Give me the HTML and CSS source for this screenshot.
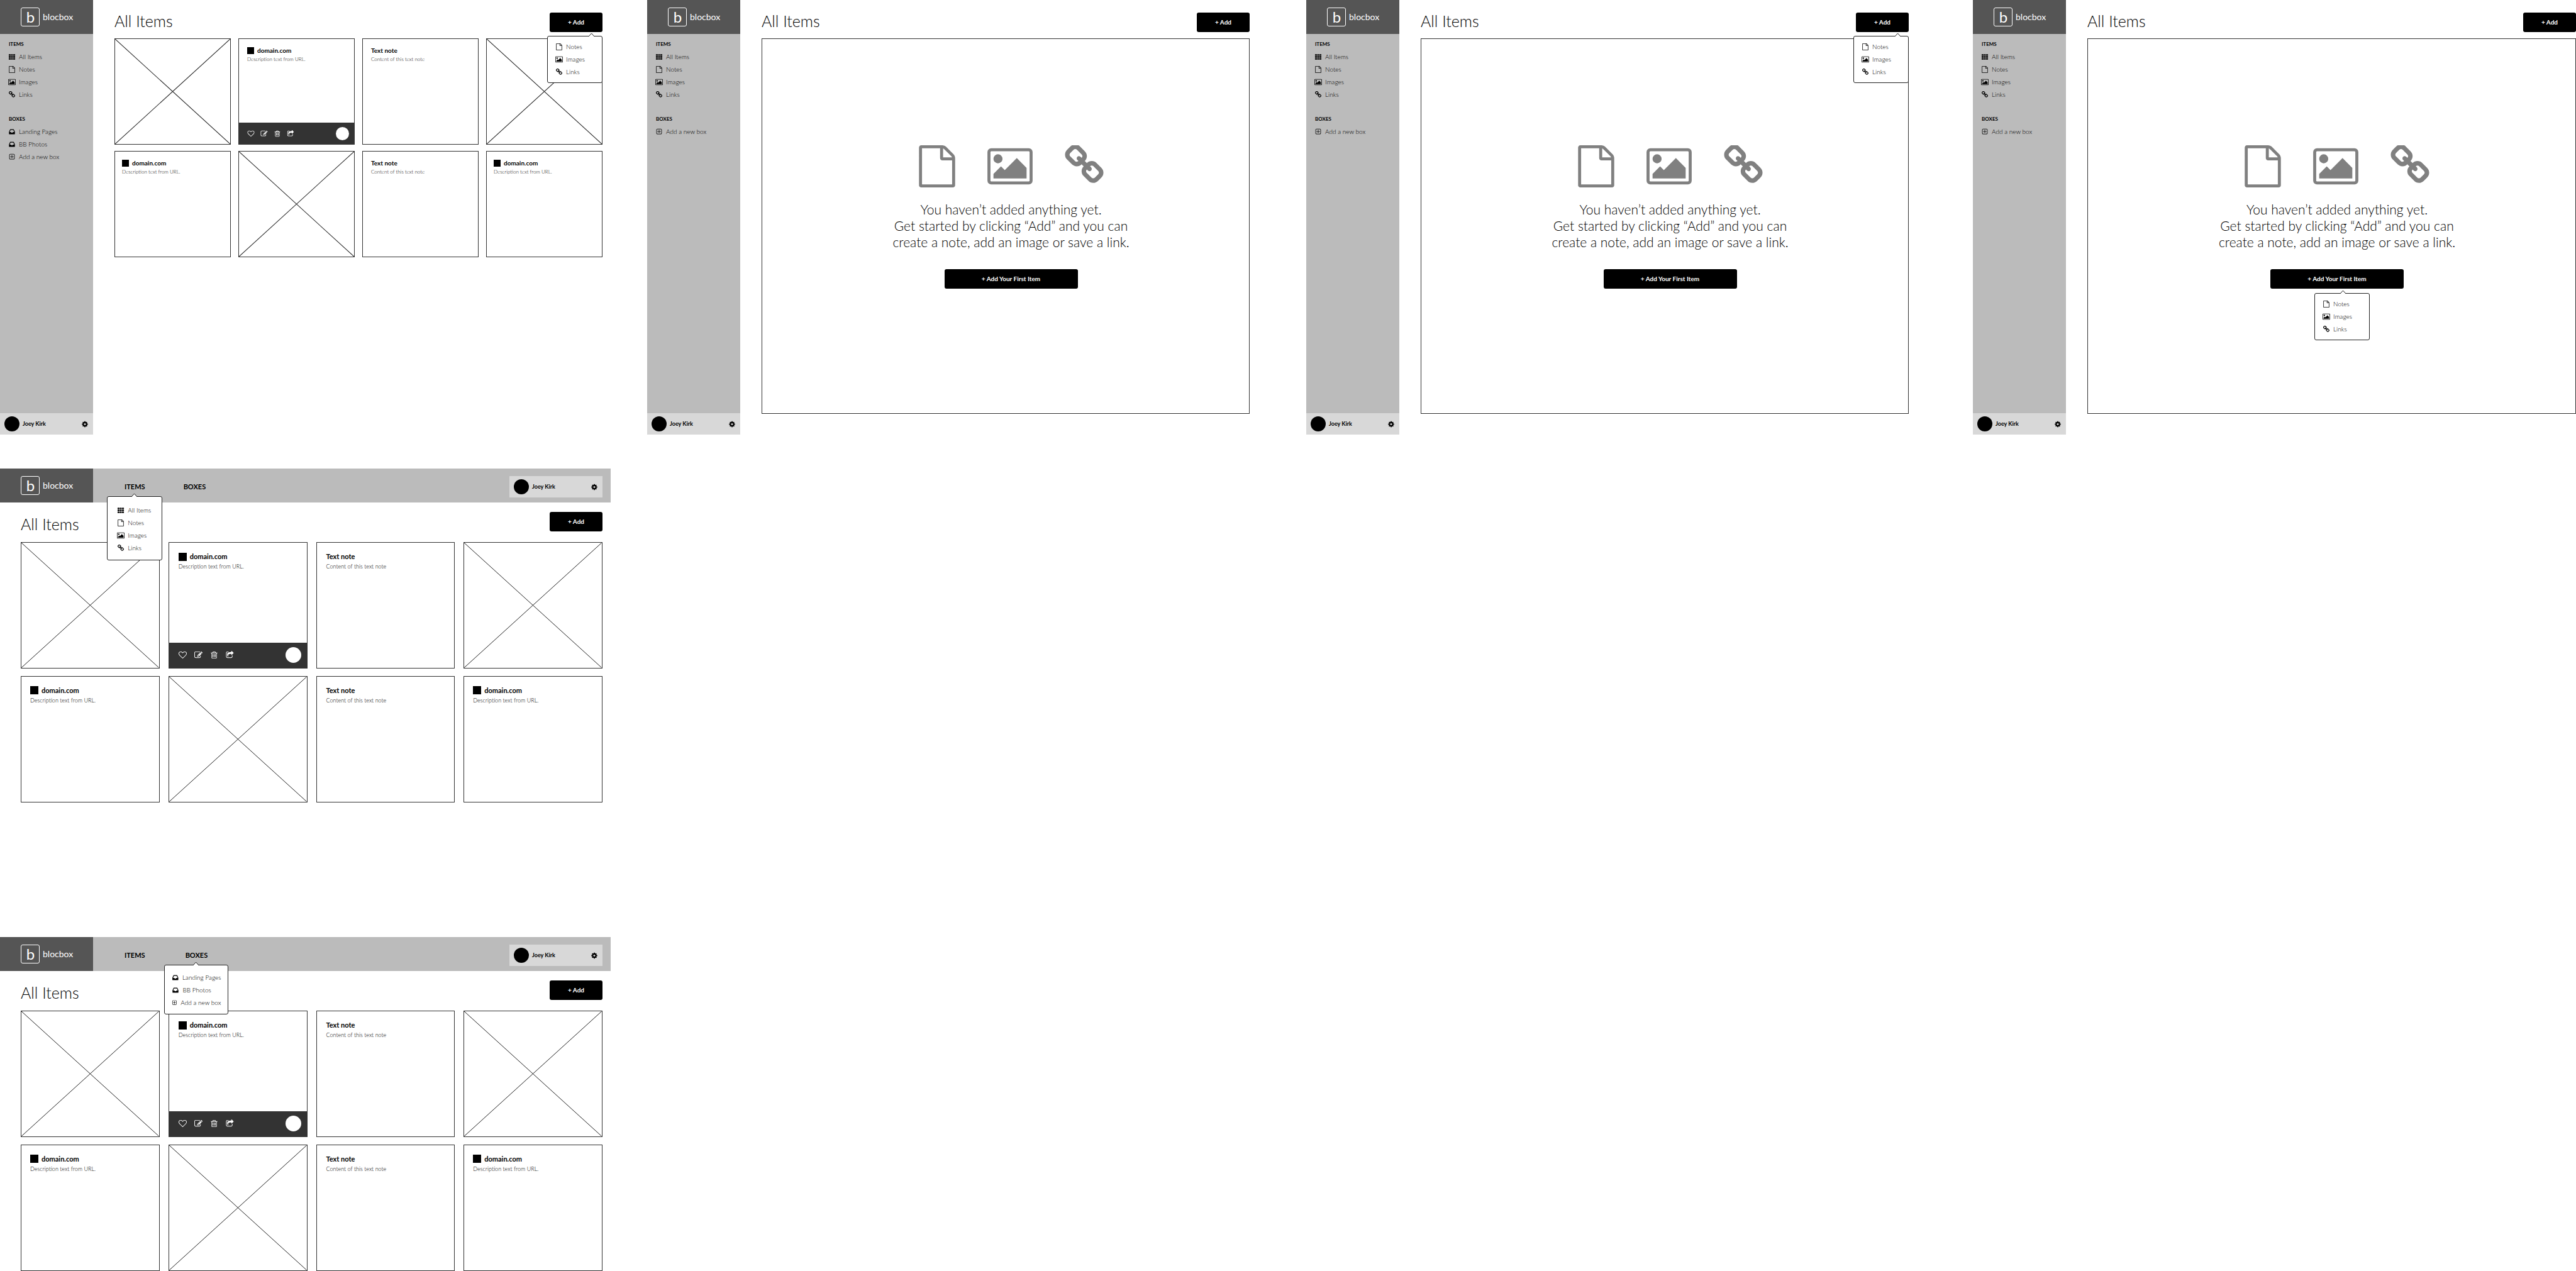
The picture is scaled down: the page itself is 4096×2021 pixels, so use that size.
FILE: index.html
```html
<!DOCTYPE html>
<html lang="en">
<head>
<meta charset="utf-8">
<meta name="viewport" content="width=device-width, initial-scale=1">
<title>blocbox wireframes</title>
<link rel="stylesheet" href="styles.css">
</head>
<body>
<svg class="sprite" aria-hidden="true">
  <symbol id="i-th" viewBox="0 0 1792 1792"><path d="M160 192h320a96 96 0 0 1 96 96v192a96 96 0 0 1-96 96h-320a96 96 0 0 1-96-96v-192a96 96 0 0 1 96-96zM736 192h320a96 96 0 0 1 96 96v192a96 96 0 0 1-96 96h-320a96 96 0 0 1-96-96v-192a96 96 0 0 1 96-96zM1312 192h320a96 96 0 0 1 96 96v192a96 96 0 0 1-96 96h-320a96 96 0 0 1-96-96v-192a96 96 0 0 1 96-96zM160 704h320a96 96 0 0 1 96 96v192a96 96 0 0 1-96 96h-320a96 96 0 0 1-96-96v-192a96 96 0 0 1 96-96zM736 704h320a96 96 0 0 1 96 96v192a96 96 0 0 1-96 96h-320a96 96 0 0 1-96-96v-192a96 96 0 0 1 96-96zM1312 704h320a96 96 0 0 1 96 96v192a96 96 0 0 1-96 96h-320a96 96 0 0 1-96-96v-192a96 96 0 0 1 96-96zM160 1216h320a96 96 0 0 1 96 96v192a96 96 0 0 1-96 96h-320a96 96 0 0 1-96-96v-192a96 96 0 0 1 96-96zM736 1216h320a96 96 0 0 1 96 96v192a96 96 0 0 1-96 96h-320a96 96 0 0 1-96-96v-192a96 96 0 0 1 96-96zM1312 1216h320a96 96 0 0 1 96 96v192a96 96 0 0 1-96 96h-320a96 96 0 0 1-96-96v-192a96 96 0 0 1 96-96z"/></symbol>
  <symbol id="i-file" viewBox="128 0 1536 1792"><path d="M1596 380q28 28 48 76t20 88v1152q0 40-28 68t-68 28h-1344q-40 0-68-28t-28-68v-1600q0-40 28-68t68-28h896q40 0 88 20t76 48zm-444-244v376h376q-10-29-22-41l-313-313q-12-12-41-22zm384 1528v-1024h-416q-40 0-68-28t-28-68v-416h-768v1536h1280z"/></symbol>
  <symbol id="i-picture" viewBox="-64 0 1920 1792"><path d="M576 576q0 80-56 136t-136 56-136-56-56-136 56-136 136-56 136 56 56 136zm1024 384v448h-1408v-192l320-320 160 160 512-512zm96-704h-1600q-13 0-22.500 9.500t-9.500 22.500v1216q0 13 9.500 22.500t22.500 9.500h1600q13 0 22.500-9.500t9.500-22.500v-1216q0-13-9.500-22.500t-22.500-9.500zm160 32v1216q0 66-47 113t-113 47h-1600q-66 0-113-47t-47-113v-1216q0-66 47-113t113-47h1600q66 0 113 47t47 113z"/></symbol>
  <symbol id="i-link" viewBox="80 50 1632 1792"><path d="M1520 1216q0-40-28-68l-208-208q-28-28-68-28-42 0-72 32 3 3 19 18.500t21.500 21.500 15 19 13 25.500 3.500 27.500q0 40-28 68t-68 28q-15 0-27.500-3.500t-25.500-13-19-15-21.500-21.500-18.500-19q-33 31-33 73 0 40 28 68l206 207q27 27 68 27 40 0 68-26l147-146q28-28 28-67zm-703-705q0-40-28-68l-206-207q-28-28-68-28-39 0-68 27l-147 146q-28 28-28 67 0 40 28 68l208 208q27 27 68 27 42 0 72-31-3-3-19-18.500t-21.500-21.500-15-19-13-25.500-3.500-27.500q0-40 28-68t68-28q15 0 27.500 3.500t25.500 13 19 15 21.500 21.500 18.500 19q33-31 33-73zm895 705q0 120-85 203l-147 146q-83 83-203 83-121 0-204-85l-206-207q-83-83-83-203 0-123 88-209l-88-88q-86 88-208 88-120 0-204-84l-208-208q-84-84-84-204t85-203l147-146q83-83 203-83 121 0 204 85l206 207q83 83 83 203 0 123-88 209l88 88q86-88 208-88 120 0 204 84l208 208q84 84 84 204z"/></symbol>
  <symbol id="i-inbox" viewBox="0 0 1792 1792"><path d="M1151 960h316q-1-3-2.500-8t-2.500-8l-212-496h-708l-212 496q-1 2-2.500 8t-2.500 8h316l95 192h320zm513 30v482q0 26-19 45t-45 19h-1408q-26 0-45-19t-19-45v-482q0-62 25-123l238-552q10-25 36.500-42t52.500-17h832q26 0 52.500 17t36.500 42l238 552q25 61 25 123z"/></symbol>
  <symbol id="i-plus" viewBox="0 0 1792 1792"><path d="M1344 800v64q0 14-9 23t-23 9h-352v352q0 14-9 23t-23 9h-64q-14 0-23-9t-9-23v-352h-352q-14 0-23-9t-9-23v-64q0-14 9-23t23-9h352v-352q0-14 9-23t23-9h64q14 0 23 9t9 23v352h352q14 0 23 9t9 23zm128 448v-832q0-66-47-113t-113-47h-832q-66 0-113 47t-47 113v832q0 66 47 113t113 47h832q66 0 113-47t47-113zm128-832v832q0 119-84.500 203.500t-203.500 84.500h-832q-119 0-203.500-84.500t-84.500-203.500v-832q0-119 84.500-203.500t203.500-84.500h832q119 0 203.500 84.500t84.500 203.500z"/></symbol>
  <symbol id="i-cog" viewBox="0 0 1792 1792"><path d="M1152 896q0-106-75-181t-181-75-181 75-75 181 75 181 181 75 181-75 75-181zm512-109v222q0 12-8 23t-20 13l-185 28q-19 54-39 91 35 50 107 138 10 12 10 25t-9 23q-27 37-99 108t-94 71q-12 0-26-9l-138-108q-44 23-91 38-16 136-29 186-7 28-36 28h-222q-14 0-24.500-8.500t-11.500-21.500l-28-184q-49-16-90-37l-141 107q-10 9-25 9-14 0-25-11-126-114-165-168-7-10-7-23 0-12 8-23 15-21 51-66.500t54-70.500q-27-50-41-99l-183-27q-13-2-21-12.500t-8-23.500v-222q0-12 8-23t19-13l186-28q14-46 39-92-40-57-107-138-10-12-10-24 0-10 9-23 26-36 98.500-107.500t94.500-71.500q13 0 26 10l138 107q44-23 91-38 16-136 29-186 7-28 36-28h222q14 0 24.500 8.500t11.500 21.500l28 184q49 16 90 37l142-107q9-9 24-9 13 0 25 10 129 119 165 170 7 8 7 22 0 12-8 23-15 21-51 66.500t-54 70.500q26 50 41 98l183 28q13 2 21 12.500t8 23.500z"/></symbol>
  <symbol id="i-heart" viewBox="0 0 1792 1792"><path d="M1664 596q0-81-21.500-143t-55-98.500-81.500-59.500-94-31-98-8-112 25.500-110.500 64-86.500 72-60 61.500q-18 22-49 22t-49-22q-24-28-60-61.500t-86.500-72-110.500-64-112-25.500-98 8-94 31-81.500 59.500-55 98.500-21.500 143q0 168 187 355l581 560 580-559q188-188 188-356zm128 0q0 221-229 450l-623 600q-18 18-44 18t-44-18l-624-602q-10-8-27.500-26t-55.500-65.500-68-97.500-53.500-121-23.500-138q0-220 127-344t351-124q62 0 126.500 21.500t120 58 95.500 68.500 76 68q36-36 76-68t95.500-68.500 120-58 126.500-21.500q224 0 351 124t127 344z"/></symbol>
  <symbol id="i-edit" viewBox="0 0 1792 1792"><path d="M888 1184l116-116-152-152-116 116v56h96v96h56zm440-720q-16-16-33 1l-350 350q-17 17-1 33t33-1l350-350q17-17 1-33zm80 594v190q0 119-84.500 203.500t-203.500 84.500h-832q-119 0-203.500-84.500t-84.500-203.500v-832q0-119 84.500-203.500t203.500-84.500h832q63 0 117 25 15 7 18 23 3 17-9 29l-49 49q-14 14-32 8-23-6-45-6h-832q-66 0-113 47t-47 113v832q0 66 47 113t113 47h832q66 0 113-47t47-113v-126q0-13 9-22l64-64q15-15 35-7t20 29zm-96-738l288 288-672 672h-288v-288zm444 132l-92 92-288-288 92-92q28-28 68-28t68 28l152 152q28 28 28 68t-28 68z"/></symbol>
  <symbol id="i-trash" viewBox="0 0 1792 1792"><path d="M704 736v576q0 14-9 23t-23 9h-64q-14 0-23-9t-9-23v-576q0-14 9-23t23-9h64q14 0 23 9t9 23zm256 0v576q0 14-9 23t-23 9h-64q-14 0-23-9t-9-23v-576q0-14 9-23t23-9h64q14 0 23 9t9 23zm256 0v576q0 14-9 23t-23 9h-64q-14 0-23-9t-9-23v-576q0-14 9-23t23-9h64q14 0 23 9t9 23zm128 724v-948h-896v948q0 22 7 40.500t14.500 27 10.500 8.500h832q3 0 10.500-8.500t14.500-27 7-40.500zm-672-1076h448l-48-117q-7-9-17-11h-317q-10 2-17 11zm928 32v64q0 14-9 23t-23 9h-96v948q0 83-47 143.500t-113 60.500h-832q-66 0-113-58.500t-47-141.500v-952h-96q-14 0-23-9t-9-23v-64q0-14 9-23t23-9h309l70-167q15-37 54-63t79-26h320q40 0 79 26t54 63l70 167h309q14 0 23 9t9 23z"/></symbol>
  <symbol id="i-share" viewBox="0 0 1792 1792"><path d="M1472 989v259q0 119-84.500 203.500t-203.500 84.500h-832q-119 0-203.500-84.500t-84.500-203.500v-832q0-119 84.500-203.500t203.500-84.500h255q13 0 22.500 9.500t9.500 22.500q0 27-26 32-77 26-133 60-10 4-16 4h-112q-66 0-113 47t-47 113v832q0 66 47 113t113 47h832q66 0 113-47t47-113v-214q0-19 18-29 28-13 54-37 16-16 35-8 21 9 21 29zm237-496l-384 384q-18 19-45 19-12 0-25-5-39-17-39-59v-192h-160q-323 0-438 131-119 137-74 473 3 23-20 34-8 2-12 2-16 0-26-13-10-14-21-31t-39.500-68.500-49.500-99.500-38.500-114-17.500-122q0-49 3.500-91t14-90 28-88 47-81.500 68.500-74 94.500-61.500 124.500-48.500 159.500-30.500 196.500-11h160v-192q0-42 39-59 13-5 25-5 26 0 45 19l384 384q19 19 19 45t-19 45z"/></symbol>
  <symbol id="i-cross" viewBox="0 0 100 100" preserveAspectRatio="none"><path d="M0 0L100 100M100 0L0 100" fill="none" stroke="#222" vector-effect="non-scaling-stroke"/></symbol>
  <symbol id="i-arrow" viewBox="0 0 9 6"><path d="M0 6L4.500 1L9 6" fill="#fff" stroke="#222"/></symbol>
</svg>

<main class="board">

  <section class="frame">
    <aside class="sidebar">
      <a class="logo" href="#"><span class="logo-mark">b</span><span class="logo-name">blocbox</span></a>
      <nav class="side-nav">
        <h2 class="label">ITEMS</h2>
        <ul class="list">
          <li><a class="item" href="#"><svg class="icon"><use href="#i-th"/></svg>All Items</a></li>
          <li><a class="item" href="#"><svg class="icon"><use href="#i-file"/></svg>Notes</a></li>
          <li><a class="item" href="#"><svg class="icon"><use href="#i-picture"/></svg>Images</a></li>
          <li><a class="item" href="#"><svg class="icon"><use href="#i-link"/></svg>Links</a></li>
        </ul>
        <h2 class="label">BOXES</h2>
        <ul class="list">
          <li><a class="item" href="#"><svg class="icon"><use href="#i-inbox"/></svg>Landing Pages</a></li>
          <li><a class="item" href="#"><svg class="icon"><use href="#i-inbox"/></svg>BB Photos</a></li>
          <li><a class="item" href="#"><svg class="icon"><use href="#i-plus"/></svg>Add a new box</a></li>
        </ul>
      </nav>
      <div class="user"><span class="avatar"></span><span class="user-name">Joey Kirk</span><button class="gear" aria-label="Settings"><svg class="icon"><use href="#i-cog"/></svg></button></div>
    </aside>
    <div class="content">
      <header class="head">
        <h1 class="title">All Items</h1>
        <div class="anchor">
          <button class="btn">+ Add</button>
          <ul class="menu menu--end">
            <li><a class="item" href="#"><svg class="icon"><use href="#i-file"/></svg>Notes</a></li>
            <li><a class="item" href="#"><svg class="icon"><use href="#i-picture"/></svg>Images</a></li>
            <li><a class="item" href="#"><svg class="icon"><use href="#i-link"/></svg>Links</a></li>
          </ul>
          <svg class="arrow arrow--end"><use href="#i-arrow"/></svg>
        </div>
      </header>
      <div class="cards">
        <article class="card"><svg class="cross"><use href="#i-cross"/></svg></article>
        <article class="card card--active">
          <div class="card-body"><h3 class="card-title"><span class="favicon"></span>domain.com</h3><p class="card-text">Description text from URL.</p></div>
          <footer class="tools">
            <button class="tool" aria-label="Like"><svg class="icon"><use href="#i-heart"/></svg></button>
            <button class="tool" aria-label="Edit"><svg class="icon"><use href="#i-edit"/></svg></button>
            <button class="tool" aria-label="Delete"><svg class="icon"><use href="#i-trash"/></svg></button>
            <button class="tool" aria-label="Share"><svg class="icon"><use href="#i-share"/></svg></button>
            <span class="dot"></span>
          </footer>
        </article>
        <article class="card card--note"><div class="card-body"><h3 class="card-title">Text note</h3><p class="card-text">Content of this text note</p></div></article>
        <article class="card"><svg class="cross"><use href="#i-cross"/></svg></article>
        <article class="card"><div class="card-body"><h3 class="card-title"><span class="favicon"></span>domain.com</h3><p class="card-text">Description text from URL.</p></div></article>
        <article class="card"><svg class="cross"><use href="#i-cross"/></svg></article>
        <article class="card card--note"><div class="card-body"><h3 class="card-title">Text note</h3><p class="card-text">Content of this text note</p></div></article>
        <article class="card"><div class="card-body"><h3 class="card-title"><span class="favicon"></span>domain.com</h3><p class="card-text">Description text from URL.</p></div></article>
      </div>
    </div>
  </section>

  <section class="frame">
    <aside class="sidebar">
      <a class="logo" href="#"><span class="logo-mark">b</span><span class="logo-name">blocbox</span></a>
      <nav class="side-nav">
        <h2 class="label">ITEMS</h2>
        <ul class="list">
          <li><a class="item" href="#"><svg class="icon"><use href="#i-th"/></svg>All Items</a></li>
          <li><a class="item" href="#"><svg class="icon"><use href="#i-file"/></svg>Notes</a></li>
          <li><a class="item" href="#"><svg class="icon"><use href="#i-picture"/></svg>Images</a></li>
          <li><a class="item" href="#"><svg class="icon"><use href="#i-link"/></svg>Links</a></li>
        </ul>
        <h2 class="label">BOXES</h2>
        <ul class="list">
          <li><a class="item" href="#"><svg class="icon"><use href="#i-plus"/></svg>Add a new box</a></li>
        </ul>
      </nav>
      <div class="user"><span class="avatar"></span><span class="user-name">Joey Kirk</span><button class="gear" aria-label="Settings"><svg class="icon"><use href="#i-cog"/></svg></button></div>
    </aside>
    <div class="content">
      <header class="head">
        <h1 class="title">All Items</h1>
        <div class="anchor"><button class="btn">+ Add</button></div>
      </header>
      <div class="empty">
        <div class="empty-icons">
          <svg class="big big--file"><use href="#i-file"/></svg>
          <svg class="big big--picture"><use href="#i-picture"/></svg>
          <svg class="big big--link"><use href="#i-link"/></svg>
        </div>
        <p class="empty-text">You haven’t added anything yet.<br>Get started by clicking “Add” and you can<br>create a note, add an image or save a link.</p>
        <div class="anchor"><button class="btn btn--wide">+ Add Your First Item</button></div>
      </div>
    </div>
  </section>

  <section class="frame">
    <aside class="sidebar">
      <a class="logo" href="#"><span class="logo-mark">b</span><span class="logo-name">blocbox</span></a>
      <nav class="side-nav">
        <h2 class="label">ITEMS</h2>
        <ul class="list">
          <li><a class="item" href="#"><svg class="icon"><use href="#i-th"/></svg>All Items</a></li>
          <li><a class="item" href="#"><svg class="icon"><use href="#i-file"/></svg>Notes</a></li>
          <li><a class="item" href="#"><svg class="icon"><use href="#i-picture"/></svg>Images</a></li>
          <li><a class="item" href="#"><svg class="icon"><use href="#i-link"/></svg>Links</a></li>
        </ul>
        <h2 class="label">BOXES</h2>
        <ul class="list">
          <li><a class="item" href="#"><svg class="icon"><use href="#i-plus"/></svg>Add a new box</a></li>
        </ul>
      </nav>
      <div class="user"><span class="avatar"></span><span class="user-name">Joey Kirk</span><button class="gear" aria-label="Settings"><svg class="icon"><use href="#i-cog"/></svg></button></div>
    </aside>
    <div class="content">
      <header class="head">
        <h1 class="title">All Items</h1>
        <div class="anchor">
          <button class="btn">+ Add</button>
          <ul class="menu menu--end">
            <li><a class="item" href="#"><svg class="icon"><use href="#i-file"/></svg>Notes</a></li>
            <li><a class="item" href="#"><svg class="icon"><use href="#i-picture"/></svg>Images</a></li>
            <li><a class="item" href="#"><svg class="icon"><use href="#i-link"/></svg>Links</a></li>
          </ul>
          <svg class="arrow arrow--end"><use href="#i-arrow"/></svg>
        </div>
      </header>
      <div class="empty">
        <div class="empty-icons">
          <svg class="big big--file"><use href="#i-file"/></svg>
          <svg class="big big--picture"><use href="#i-picture"/></svg>
          <svg class="big big--link"><use href="#i-link"/></svg>
        </div>
        <p class="empty-text">You haven’t added anything yet.<br>Get started by clicking “Add” and you can<br>create a note, add an image or save a link.</p>
        <div class="anchor"><button class="btn btn--wide">+ Add Your First Item</button></div>
      </div>
    </div>
  </section>

  <section class="frame frame--flush">
    <aside class="sidebar">
      <a class="logo" href="#"><span class="logo-mark">b</span><span class="logo-name">blocbox</span></a>
      <nav class="side-nav">
        <h2 class="label">ITEMS</h2>
        <ul class="list">
          <li><a class="item" href="#"><svg class="icon"><use href="#i-th"/></svg>All Items</a></li>
          <li><a class="item" href="#"><svg class="icon"><use href="#i-file"/></svg>Notes</a></li>
          <li><a class="item" href="#"><svg class="icon"><use href="#i-picture"/></svg>Images</a></li>
          <li><a class="item" href="#"><svg class="icon"><use href="#i-link"/></svg>Links</a></li>
        </ul>
        <h2 class="label">BOXES</h2>
        <ul class="list">
          <li><a class="item" href="#"><svg class="icon"><use href="#i-plus"/></svg>Add a new box</a></li>
        </ul>
      </nav>
      <div class="user"><span class="avatar"></span><span class="user-name">Joey Kirk</span><button class="gear" aria-label="Settings"><svg class="icon"><use href="#i-cog"/></svg></button></div>
    </aside>
    <div class="content">
      <header class="head">
        <h1 class="title">All Items</h1>
        <div class="anchor"><button class="btn">+ Add</button></div>
      </header>
      <div class="empty">
        <div class="empty-icons">
          <svg class="big big--file"><use href="#i-file"/></svg>
          <svg class="big big--picture"><use href="#i-picture"/></svg>
          <svg class="big big--link"><use href="#i-link"/></svg>
        </div>
        <p class="empty-text">You haven’t added anything yet.<br>Get started by clicking “Add” and you can<br>create a note, add an image or save a link.</p>
        <div class="anchor">
          <button class="btn btn--wide">+ Add Your First Item</button>
          <ul class="menu menu--first">
            <li><a class="item" href="#"><svg class="icon"><use href="#i-file"/></svg>Notes</a></li>
            <li><a class="item" href="#"><svg class="icon"><use href="#i-picture"/></svg>Images</a></li>
            <li><a class="item" href="#"><svg class="icon"><use href="#i-link"/></svg>Links</a></li>
          </ul>
          <svg class="arrow arrow--first"><use href="#i-arrow"/></svg>
        </div>
      </div>
    </div>
  </section>

  <section class="frame frame--top">
    <header class="topbar">
      <a class="logo" href="#"><span class="logo-mark">b</span><span class="logo-name">blocbox</span></a>
      <nav class="top-nav">
        <div class="anchor">
          <button class="tab">ITEMS</button>
          <ul class="menu menu--items">
            <li><a class="item" href="#"><svg class="icon"><use href="#i-th"/></svg>All Items</a></li>
            <li><a class="item" href="#"><svg class="icon"><use href="#i-file"/></svg>Notes</a></li>
            <li><a class="item" href="#"><svg class="icon"><use href="#i-picture"/></svg>Images</a></li>
            <li><a class="item" href="#"><svg class="icon"><use href="#i-link"/></svg>Links</a></li>
          </ul>
          <svg class="arrow arrow--tab"><use href="#i-arrow"/></svg>
        </div>
        <div class="anchor"><button class="tab">BOXES</button></div>
      </nav>
      <div class="user"><span class="avatar"></span><span class="user-name">Joey Kirk</span><button class="gear" aria-label="Settings"><svg class="icon"><use href="#i-cog"/></svg></button></div>
    </header>
    <div class="content">
      <header class="head">
        <h1 class="title">All Items</h1>
        <div class="anchor"><button class="btn">+ Add</button></div>
      </header>
      <div class="cards">
        <article class="card"><svg class="cross"><use href="#i-cross"/></svg></article>
        <article class="card card--active">
          <div class="card-body"><h3 class="card-title"><span class="favicon"></span>domain.com</h3><p class="card-text">Description text from URL.</p></div>
          <footer class="tools">
            <button class="tool" aria-label="Like"><svg class="icon"><use href="#i-heart"/></svg></button>
            <button class="tool" aria-label="Edit"><svg class="icon"><use href="#i-edit"/></svg></button>
            <button class="tool" aria-label="Delete"><svg class="icon"><use href="#i-trash"/></svg></button>
            <button class="tool" aria-label="Share"><svg class="icon"><use href="#i-share"/></svg></button>
            <span class="dot"></span>
          </footer>
        </article>
        <article class="card card--note"><div class="card-body"><h3 class="card-title">Text note</h3><p class="card-text">Content of this text note</p></div></article>
        <article class="card"><svg class="cross"><use href="#i-cross"/></svg></article>
        <article class="card"><div class="card-body"><h3 class="card-title"><span class="favicon"></span>domain.com</h3><p class="card-text">Description text from URL.</p></div></article>
        <article class="card"><svg class="cross"><use href="#i-cross"/></svg></article>
        <article class="card card--note"><div class="card-body"><h3 class="card-title">Text note</h3><p class="card-text">Content of this text note</p></div></article>
        <article class="card"><div class="card-body"><h3 class="card-title"><span class="favicon"></span>domain.com</h3><p class="card-text">Description text from URL.</p></div></article>
      </div>
    </div>
  </section>

  <section class="frame frame--top frame--last">
    <header class="topbar">
      <a class="logo" href="#"><span class="logo-mark">b</span><span class="logo-name">blocbox</span></a>
      <nav class="top-nav">
        <div class="anchor"><button class="tab">ITEMS</button></div>
        <div class="anchor">
          <button class="tab">BOXES</button>
          <ul class="menu menu--boxes">
            <li><a class="item" href="#"><svg class="icon"><use href="#i-inbox"/></svg>Landing Pages</a></li>
            <li><a class="item" href="#"><svg class="icon"><use href="#i-inbox"/></svg>BB Photos</a></li>
            <li><a class="item" href="#"><svg class="icon"><use href="#i-plus"/></svg>Add a new box</a></li>
          </ul>
          <svg class="arrow arrow--tab"><use href="#i-arrow"/></svg>
        </div>
      </nav>
      <div class="user"><span class="avatar"></span><span class="user-name">Joey Kirk</span><button class="gear" aria-label="Settings"><svg class="icon"><use href="#i-cog"/></svg></button></div>
    </header>
    <div class="content">
      <header class="head">
        <h1 class="title">All Items</h1>
        <div class="anchor"><button class="btn">+ Add</button></div>
      </header>
      <div class="cards">
        <article class="card"><svg class="cross"><use href="#i-cross"/></svg></article>
        <article class="card card--active">
          <div class="card-body"><h3 class="card-title"><span class="favicon"></span>domain.com</h3><p class="card-text">Description text from URL.</p></div>
          <footer class="tools">
            <button class="tool" aria-label="Like"><svg class="icon"><use href="#i-heart"/></svg></button>
            <button class="tool" aria-label="Edit"><svg class="icon"><use href="#i-edit"/></svg></button>
            <button class="tool" aria-label="Delete"><svg class="icon"><use href="#i-trash"/></svg></button>
            <button class="tool" aria-label="Share"><svg class="icon"><use href="#i-share"/></svg></button>
            <span class="dot"></span>
          </footer>
        </article>
        <article class="card card--note"><div class="card-body"><h3 class="card-title">Text note</h3><p class="card-text">Content of this text note</p></div></article>
        <article class="card"><svg class="cross"><use href="#i-cross"/></svg></article>
        <article class="card"><div class="card-body"><h3 class="card-title"><span class="favicon"></span>domain.com</h3><p class="card-text">Description text from URL.</p></div></article>
        <article class="card"><svg class="cross"><use href="#i-cross"/></svg></article>
        <article class="card card--note"><div class="card-body"><h3 class="card-title">Text note</h3><p class="card-text">Content of this text note</p></div></article>
        <article class="card"><div class="card-body"><h3 class="card-title"><span class="favicon"></span>domain.com</h3><p class="card-text">Description text from URL.</p></div></article>
      </div>
    </div>
  </section>

</main>
</body>
</html>
```
FILE: styles.css
```css
*, *::before, *::after { box-sizing: border-box; }

body {
  margin: 0;
  background: #fff;
  color: #000;
  font: 300 10px/20px Lato, "Open Sans", sans-serif;
}

h1, h2, h3, p, ul { margin: 0; padding: 0; }
ul { list-style: none; }
a { color: inherit; text-decoration: none; }
button { margin: 0; padding: 0; border: 0; background: none; color: inherit; font: inherit; cursor: pointer; }
svg { display: block; fill: currentColor; }
.sprite { position: absolute; width: 0; height: 0; }

/* Board: four frames across the top, the two top-bar frames under the first */
.board {
  display: grid;
  grid-template-columns: 971fr 58fr 971fr 77fr 971fr 89fr 959fr;
  row-gap: 54px;
}
.frame { display: flex; min-height: 691px; grid-column: 1; }
.frame:nth-child(2) { grid-column: 3; }
.frame:nth-child(3) { grid-column: 5; }
.frame:nth-child(4) { grid-column: 7; }
.frame--top { flex-direction: column; }
.frame--last { min-height: 0; }

/* Sidebar */
.sidebar { display: flex; flex-direction: column; flex: none; width: 148px; background: #bbb; }
.logo {
  display: flex;
  flex: none;
  align-items: center;
  gap: 5px;
  width: 148px;
  height: 54px;
  padding-left: 33px;
  background: #555;
  color: #fff;
  font-weight: 400;
}
.logo-mark {
  width: 30px;
  height: 30px;
  padding-left: 1px;
  border: 1px solid #fff;
  border-radius: 3px;
  font-size: 24px;
  line-height: 28px;
  text-align: center;
}
.logo-name { font-size: 14px; }
.side-nav { display: flex; flex-direction: column; flex: 1; padding: 6px 14px; }
.label { font-size: 8px; font-weight: 700; line-height: 20px; }
.list + .label { margin-top: 19px; }
.item { display: flex; align-items: center; gap: 5px; line-height: 20px; white-space: nowrap; }
.side-nav .item { margin-left: -1px; }
.icon { width: 12px; height: 11px; }

.user { display: flex; align-items: center; gap: 5px; height: 34px; padding: 0 7px; background: #d8d8d8; }
.avatar { width: 24px; height: 24px; border-radius: 50%; background: #000; }
.user-name { flex: 1; font-size: 9px; font-weight: 700; }

/* Page area */
.content { display: flex; flex: 1; flex-direction: column; min-width: 0; padding: 20px 13px 33px 34px; }
.frame--flush .content { padding-right: 0; }
.frame--top .content { padding: 15px 13px 0 33px; }
.head { display: flex; align-items: flex-start; justify-content: space-between; margin-bottom: 10px; }
.title { font-size: 25px; font-weight: 300; line-height: 26px; }
.frame--top .head { margin-bottom: 13px; }
.frame--top .title { margin-top: 4px; line-height: 31px; }
.anchor { position: relative; }
.btn {
  display: block;
  width: 84px;
  height: 31px;
  padding-bottom: 2px;
  border-radius: 3px;
  background: #000;
  color: #fff;
  font-size: 10px;
  font-weight: 700;
}
.btn--wide { width: 212px; }

/* Drop-down menus */
.menu {
  position: absolute;
  z-index: 1;
  width: 88px;
  padding: 6px 12px 7px;
  border: 1px solid #222;
  border-radius: 3px;
  background: #fff;
}
.menu--end { top: 37px; right: 0; }
.menu--first { top: 38px; left: 70px; }
.menu--items { top: 25px; left: 50%; margin-left: -44px; padding: 11px 15px 9px; }
.menu--boxes { top: 25px; left: 50%; width: 102px; margin-left: -51px; padding: 9px 11px 8px; }
.arrow { position: absolute; z-index: 2; width: 9px; height: 6px; }
.arrow--end { top: 32px; right: 13px; }
.arrow--first { top: 33px; left: 111px; }
.arrow--tab { top: 20px; left: 50%; margin-left: -5px; }

/* Cards */
.cards { display: grid; grid-template-columns: repeat(4, 1fr); gap: 10px 12px; }
.card { display: flex; flex-direction: column; justify-content: space-between; aspect-ratio: 185 / 169; border: 1px solid #333; }
.cross { width: 100%; height: 100%; }
.card-body { padding: 11px 11px 0; }
.card--active .card-body, .card--note .card-body { padding-left: 13px; }
.card-title { display: flex; align-items: center; gap: 5px; font-size: 10px; font-weight: 700; line-height: 15px; }
.favicon { width: 11px; height: 11px; background: #000; }
.card-text { font-size: 8px; line-height: 12px; }
.tools { display: flex; align-items: center; gap: 9px; height: 34px; padding: 0 8px 0 13px; background: #333; color: #fff; }
.dot { width: 21px; height: 21px; margin-left: auto; border-radius: 50%; background: #fff; }

.frame--top .cards { gap: 12px 14px; }
.frame--top .card { aspect-ratio: 221 / 201; }
.frame--top .card-body { padding: 13px 14px 0; }
.frame--top .card--active .card-body, .frame--top .card--note .card-body { padding-left: 15px; }
.frame--top .card-title { font-size: 11px; line-height: 18px; }
.frame--top .favicon { width: 13px; height: 13px; }
.frame--top .card-text { font-size: 9px; line-height: 14px; }
.frame--top .tools { gap: 12px; height: 40px; padding: 0 9px 0 15px; }
.frame--top .tools .icon { width: 13px; height: 13px; }
.frame--top .dot { width: 25px; height: 25px; }

/* Empty state */
.empty {
  display: flex;
  flex: 1;
  flex-direction: column;
  align-items: center;
  padding: 169px 0 0 17px;
  border: 1px solid #333;
}
.empty-icons { display: flex; gap: 51px; color: #808080; }
.big { height: 67px; }
.big--file { width: 58px; }
.big--picture { width: 72px; }
.big--link { width: 62px; }
.empty-text { margin: 22px 0 30px; font-size: 21px; line-height: 26px; text-align: center; }

/* Top bar */
.topbar { display: flex; align-items: center; height: 54px; padding-right: 13px; background: #bbb; }
.top-nav { display: flex; flex: 1; gap: 61px; padding: 4px 0 0 50px; }
.frame--last .top-nav { gap: 64px; }
.tab { display: block; font-size: 11px; font-weight: 700; line-height: 20px; }
.topbar .user { width: 148px; margin-top: 4px; }
```
